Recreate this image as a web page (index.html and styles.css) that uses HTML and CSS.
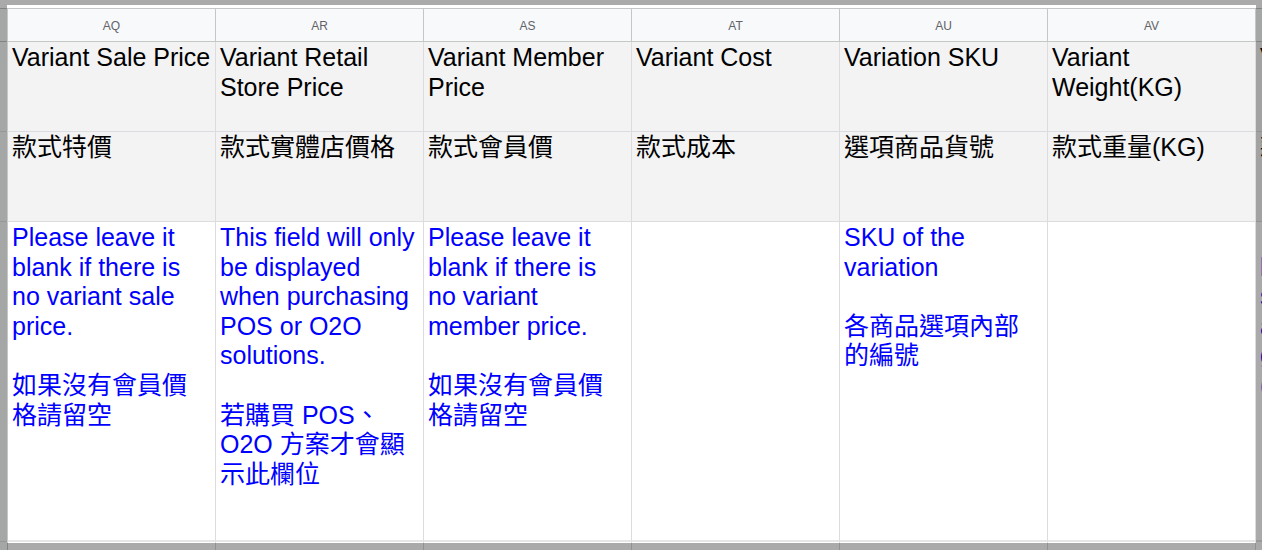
FILE: index.html
```html
<!DOCTYPE html>
<html lang="zh-Hant">
<head>
<meta charset="utf-8">
<title>Sheet</title>
<link rel="stylesheet" href="styles.css">
</head>
<body>
<div class="app">
  <div class="toolbar-gap"></div>
  <div class="sheet">
    <div class="stub head"></div>
    <div class="col-head">AQ</div>
    <div class="col-head">AR</div>
    <div class="col-head">AS</div>
    <div class="col-head">AT</div>
    <div class="col-head">AU</div>
    <div class="col-head">AV</div>
    <div class="col-head">AW</div>

    <div class="stub"></div>
    <div class="cell title">Variant Sale Price</div>
    <div class="cell title">Variant Retail Store Price</div>
    <div class="cell title">Variant Member Price</div>
    <div class="cell title">Variant Cost</div>
    <div class="cell title">Variation SKU</div>
    <div class="cell title">Variant Weight(KG)</div>
    <div class="cell title">Variant Image</div>

    <div class="stub"></div>
    <div class="cell title">款式特價</div>
    <div class="cell title">款式實體店價格</div>
    <div class="cell title">款式會員價</div>
    <div class="cell title">款式成本</div>
    <div class="cell title">選項商品貨號</div>
    <div class="cell title">款式重量(KG)</div>
    <div class="cell title">款式圖片</div>

    <div class="stub"></div>
    <div class="cell note"><p>Please leave it blank if there is no variant sale price.</p><p>如果沒有會員價格請留空</p></div>
    <div class="cell note"><p>This field will only be displayed when purchasing POS or O2O solutions.</p><p>若購買 POS、O2O 方案才會顯示此欄位</p></div>
    <div class="cell note"><p>Please leave it blank if there is no variant member price.</p><p>如果沒有會員價格請留空</p></div>
    <div class="cell note"></div>
    <div class="cell note"><p>SKU of the variation</p><p>各商品選項內部的編號</p></div>
    <div class="cell note"></div>
    <div class="cell note"><p>&nbsp;<br>lbs<br>sa<br>as<br>go<br>(1)</p></div>

    <div class="stub"></div>
    <div class="cell next"></div>
    <div class="cell next"></div>
    <div class="cell next"></div>
    <div class="cell next"></div>
    <div class="cell next"></div>
    <div class="cell next"></div>
    <div class="cell next"></div>
  </div>
  <div class="frame"></div>
</div>
</body>
</html>
```

FILE: styles.css
```css
html, body {
  margin: 0;
  padding: 0;
  background: #ffffff;
}

body {
  width: 1262px;
  height: 550px;
  overflow: hidden;
  font-family: "Liberation Sans", Arial, "Noto Sans CJK TC", sans-serif;
}

.app {
  position: relative;
  width: 1262px;
  height: 550px;
  overflow: hidden;
  background: #ffffff;
}

.toolbar-gap {
  height: 8px;
  background: #ffffff;
  border-bottom: 1px solid #c4c7c5;
}

.sheet {
  display: grid;
  grid-template-columns: 8px repeat(7, 208px);
  grid-template-rows: 33px 90px 90px 320px 40px;
}

.stub {
  background: #f8f9fa;
  border-right: 1px solid #c4c7c5;
  border-bottom: 1px solid #e2e3e3;
}

.stub.head {
  border-bottom: 1px solid #c4c7c5;
}

.col-head {
  background: #f8f9fa;
  border-right: 1px solid #c4c7c5;
  border-bottom: 1px solid #c4c7c5;
  color: #5f6368;
  font-family: "Liberation Sans", Arial, sans-serif;
  font-size: 12px;
  display: flex;
  align-items: center;
  justify-content: center;
  padding-top: 1px;
  box-sizing: border-box;
}

.cell {
  box-sizing: border-box;
  border-right: 1px solid #dadce0;
  border-bottom: 1px solid #dadce0;
  padding: 1px 4px 0 4px;
  font-size: 25px;
  line-height: 29.6px;
  color: #000000;
  overflow: hidden;
}

.cell.title {
  background: #f3f3f3;
}

.cell.note {
  background: #ffffff;
  color: #0000ff;
  padding-top: 1px;
  border-bottom: 2px solid #e6e6e6;
}

.cell.note p {
  margin: 0 0 29.6px 0;
}

.cell.note p:last-child {
  margin-bottom: 0;
}

.cell.next {
  background: #ffffff;
}

.frame {
  position: absolute;
  inset: 0;
  border-style: solid;
  border-color: rgba(0, 0, 0, 0.335);
  border-width: 5px 6px 7px 7px;
  pointer-events: none;
}
```
